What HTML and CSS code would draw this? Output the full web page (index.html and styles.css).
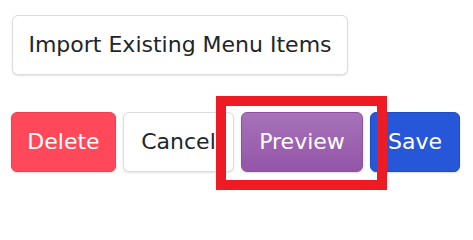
FILE: index.html
```html
<!DOCTYPE html>
<html>
<head>
<meta charset="utf-8">
<link rel="stylesheet" href="styles.css">
</head>
<body>
<div class="page">
  <div class="top-row">
    <button class="btn btn-light btn-import">Import Existing Menu Items</button>
  </div>
  <div class="action-row">
    <button class="btn btn-delete">Delete</button>
    <button class="btn btn-light btn-cancel">Cancel</button>
    <span class="highlight-wrap">
      <button class="btn btn-preview">Preview</button>
      <span class="highlight-box"></span>
    </span>
    <button class="btn btn-save">Save</button>
  </div>
</div>
</body>
</html>
```
FILE: styles.css
```css
html, body {
  margin: 0;
  padding: 0;
  background: #ffffff;
}

.page {
  padding: 15px 0 0 11px;
  min-height: 208px;
  box-sizing: border-box;
  display: flex;
  flex-direction: column;
  gap: 37px;
}

.top-row {
  display: flex;
  padding-left: 1px;
}

.action-row {
  display: flex;
  gap: 7px;
  align-items: center;
}

.btn {
  font-family: "DejaVu Sans", "Open Sans", sans-serif;
  font-size: 22px;
  line-height: 36px;
  height: 60px;
  padding: 11px 0;
  border: 1px solid transparent;
  border-radius: 6px;
  box-sizing: border-box;
  color: #ffffff;
  text-align: center;
  cursor: pointer;
  white-space: nowrap;
}

.btn-import {
  width: 336px;
}

.btn-delete {
  width: 105px;
  background: #ff4859;
  border-color: #ec3f50;
  box-shadow: 0 1px 2px rgba(0, 0, 0, 0.15);
}

.btn-light {
  background: #ffffff;
  color: #212529;
  border-color: #dcdcdc;
  box-shadow: 0 1px 2px rgba(0, 0, 0, 0.12);
}

.btn-cancel {
  width: 111px;
}

.btn-preview {
  width: 122px;
  background: linear-gradient(#a672b8, #9455a8);
  border-color: #8d50a2;
  box-shadow: 0 1px 2px rgba(0, 0, 0, 0.15);
}

.btn-save {
  width: 90px;
  background: #2657d8;
  border-color: #1f4cc4;
  box-shadow: 0 1px 2px rgba(0, 0, 0, 0.15);
}

.highlight-wrap {
  position: relative;
  display: flex;
}

.highlight-box {
  position: absolute;
  left: -25px;
  right: -24px;
  top: -16px;
  bottom: -18px;
  border: 10px solid #ed1c24;
  pointer-events: none;
}
```
